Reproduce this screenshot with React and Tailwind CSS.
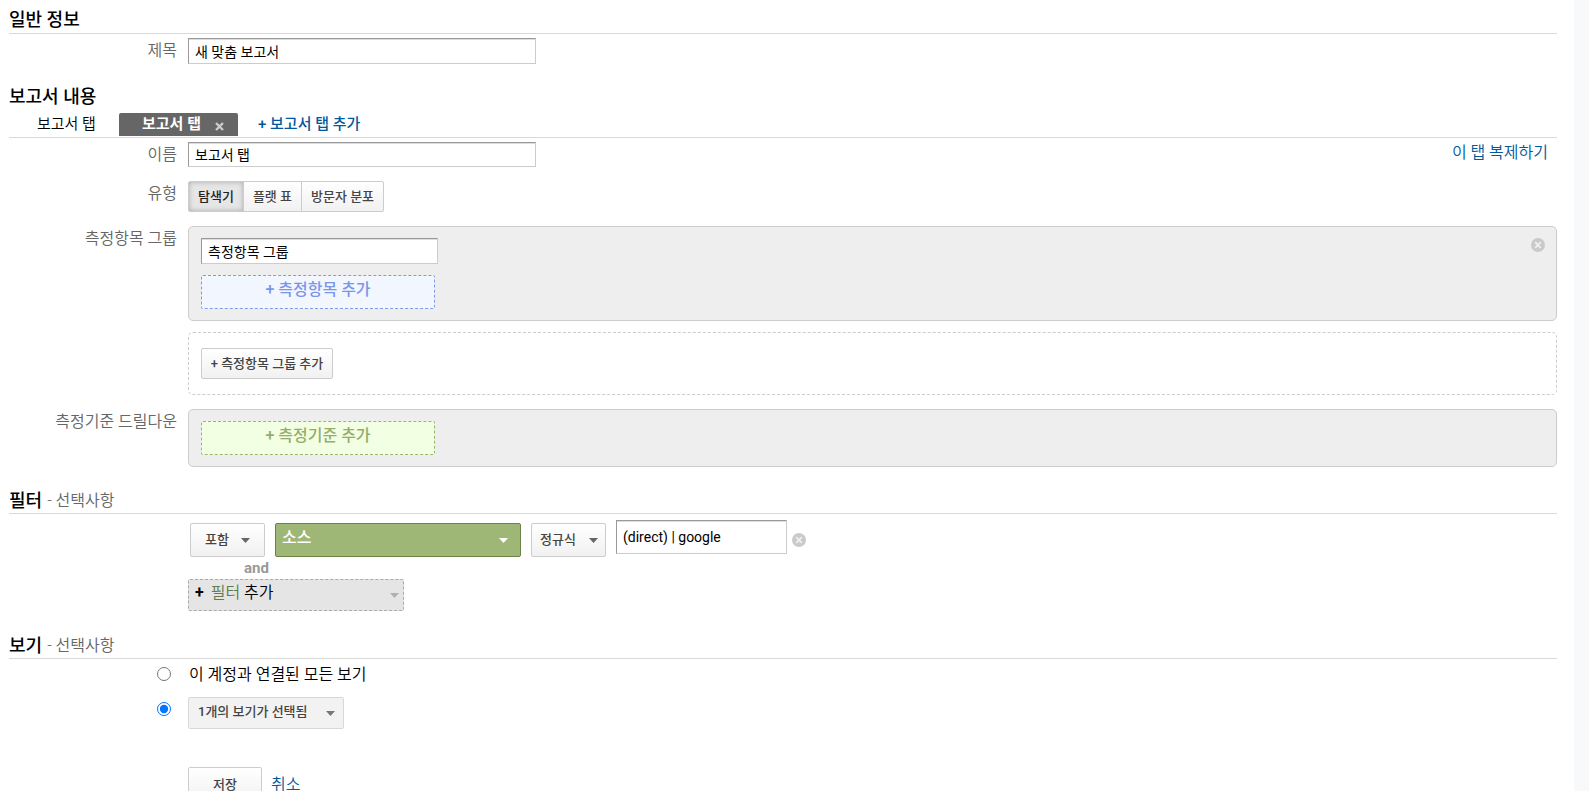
import React, { useState } from 'react';
import clsx from 'clsx';

const Caret = ({ className }) => (
    <svg className={className} width="9" height="5" viewBox="0 0 9 5" fill="currentColor" aria-hidden="true">
        <path d="M0 0h9L4.5 5z" />
    </svg>
);

const RemoveButton = ({ label, className }) => (
    <button type="button" aria-label={label} className={clsx('block h-[14px] w-[14px] shrink-0', className)}>
        <svg width="14" height="14" viewBox="0 0 14 14" aria-hidden="true">
            <circle cx="7" cy="7" r="7" fill="#cacaca" />
            <path d="M4.2 4.2l5.6 5.6M9.8 4.2L4.2 9.8" stroke="#f1f1f1" strokeWidth="1.7" />
        </svg>
    </button>
);

const SectionTitle = ({ title, note, className }) => (
    <div className={clsx('flex items-center border-b border-[#d9d9d9] leading-6', className)}>
        <h2 className="text-[18px] font-medium text-black">{title}</h2>
        {note && <span className="pl-[5px] text-base font-[350] text-[#666]">- {note}</span>}
    </div>
);

const Row = ({ label, htmlFor, className, children }) => (
    <div className={clsx('flex gap-[11px]', className)}>
        <label htmlFor={htmlFor} className="h-6 w-[168px] shrink-0 text-right text-base leading-[26px] font-[350] text-[#666]">
            {label}
        </label>
        {children}
    </div>
);

const inputStyle = 'border border-[#ccc] border-t-[#999] border-l-[#999] bg-white px-[6px] text-[14px] text-black shadow-[inset_0_1px_0_#ddd] outline-none';
const buttonStyle = 'border border-[#ccc] bg-linear-to-b from-white to-[#f1f1f1] text-[13px] font-medium text-[#444]';

const Select = ({ id, label, options, className, caret }) => (
    <div className="relative">
        <select id={id} aria-label={label} className={clsx('block appearance-none outline-none', className)}>
            {options.map((option) => (
                <option key={option}>{option}</option>
            ))}
        </select>
        <Caret className={clsx('pointer-events-none absolute', caret)} />
    </div>
);

const reportTypes = ['탐색기', '플랫 표', '방문자 분포'];

const App = () => {
    const [type, setType] = useState('탐색기');
    const [view, setView] = useState('selected');

    return (
        <div className="flex h-screen overflow-hidden bg-[#f8f9fb] font-['Roboto','Noto_Sans_CJK_KR',sans-serif]">
            <form className="min-w-0 flex-1 pr-[17px] pl-[9px] bg-white" onSubmit={(e) => e.preventDefault()}>
                <SectionTitle title="일반 정보" className="h-[34px] pt-[6px]" />
                <Row label="제목" htmlFor="title" className="pt-1">
                    <input id="title" defaultValue="새 맞춤 보고서" className={clsx(inputStyle, 'h-[26px] w-[348px] pb-px')} />
                </Row>

                <h2 className="h-11 pt-5 text-[18px] leading-[26px] font-medium text-black">보고서 내용</h2>
                <div className="flex h-[30px] items-end border-b border-[#d9d9d9] pb-px text-[15px]">
                    <button type="button" className="h-[23px] w-[110px] px-7 pb-[2px] text-left leading-5 font-[350] whitespace-nowrap text-black">
                        보고서 탭
                    </button>
                    <div className="flex h-[23px] w-[119px] rounded-t-xs bg-[#666] pl-[23px] text-white">
                        <button type="button" className="pb-[2px] leading-5 font-bold whitespace-nowrap">보고서 탭</button>
                        <button type="button" aria-label="탭 닫기" className="ml-[14px] pt-1 text-[#ccc]">
                            <svg width="9" height="9" viewBox="0 0 9 9" aria-hidden="true">
                                <path d="M1 1l7 7M8 1L1 8" stroke="currentColor" strokeWidth="2.4" />
                            </svg>
                        </button>
                    </div>
                    <button type="button" className="ml-5 h-[23px] pb-[2px] leading-5 font-medium text-[#00599c]">+ 보고서 탭 추가</button>
                </div>

                <div className="flex justify-between pt-1">
                    <Row label="이름" htmlFor="name">
                        <input id="name" defaultValue="보고서 탭" className={clsx(inputStyle, 'h-[25px] w-[348px] pb-px')} />
                    </Row>
                    <a href="#copy" className="pr-[9px] text-base leading-[22px] font-[350] text-[#00599c]">이 탭 복제하기</a>
                </div>

                <Row label="유형" className="pt-[14px]">
                    <div role="group" aria-label="유형" className="flex">
                        {reportTypes.map((name) => (
                            <button
                                key={name}
                                type="button"
                                aria-pressed={type === name}
                                onClick={() => setType(name)}
                                className={clsx(
                                    'h-[31px] border border-[#ccc] px-[9px] text-[13px] font-medium -ml-px first:ml-0 first:rounded-l-xs last:rounded-r-xs',
                                    type === name
                                        ? 'bg-[#e6e6e6] text-[#222] shadow-[inset_0_0_5px_#aaa]'
                                        : 'bg-linear-to-b from-white to-[#f1f1f1] text-[#444]'
                                )}
                            >
                                {name}
                            </button>
                        ))}
                    </div>
                </Row>

                <Row label="측정항목 그룹" htmlFor="group" className="pt-[14px]">
                    <div className="flex-1">
                        <div className="flex items-start justify-between rounded-[5px] border border-[#ccc] bg-[#eee] py-[11px] pr-[11px] pl-3">
                            <div>
                                <input id="group" defaultValue="측정항목 그룹" className={clsx(inputStyle, 'block h-[26px] w-[237px] pb-px')} />
                                <button type="button" className="mt-[11px] block h-[34px] w-[234px] rounded-xs border border-dashed border-[#7f9be8] bg-[#f2f7ff] pb-1 text-base font-medium text-[#7b96e8]">
                                    + 측정항목 추가
                                </button>
                            </div>
                            <RemoveButton label="그룹 삭제" />
                        </div>
                        <div className="mt-[11px] rounded-[5px] border border-dashed border-[#ccc] px-3 py-[15px]">
                            <button type="button" className={clsx(buttonStyle, 'block h-[31px] w-[132px] rounded-xs')}>
                                + 측정항목 그룹 추가
                            </button>
                        </div>
                    </div>
                </Row>

                <Row label="측정기준 드릴다운" className="pt-[14px]">
                    <div className="flex-1 rounded-[5px] border border-[#ccc] bg-[#eee] px-3 py-[11px]">
                        <button type="button" className="block h-[34px] w-[234px] rounded-xs border border-dashed border-[#9ab573] bg-[#f3ffe3] pb-1 text-base font-medium text-[#94ad6b]">
                            + 측정기준 추가
                        </button>
                    </div>
                </Row>

                <SectionTitle title="필터" note="선택사항" className="mt-5 h-[27px] pt-px" />
                <div className="flex items-start pt-[6px] pl-[181px]">
                    <div className="flex gap-[10px] pt-[3px]">
                        <Select label="조건" options={['포함', '제외']} className={clsx(buttonStyle, 'h-[34px] w-[75px] rounded-xs pl-[14px]')} caret="top-[15px] right-[15px] text-[#666]" />
                        <Select label="측정기준" options={['소스', '매체']} className="h-[34px] w-[246px] rounded-xs border border-[#6b8349] bg-[#9eb777] pb-1 pl-[6px] text-base font-medium text-white" caret="top-[15px] right-[13px] text-white" />
                        <Select label="일치 유형" options={['정규식', '일치']} className={clsx(buttonStyle, 'h-[34px] w-[75px] rounded-xs pl-2')} caret="top-[15px] right-2 text-[#666]" />
                    </div>
                    <input aria-label="값" defaultValue="(direct) | google" className={clsx(inputStyle, 'ml-[10px] h-[34px] w-[171px]')} />
                    <RemoveButton label="필터 삭제" className="mt-[13px] ml-[5px]" />
                </div>
                <div className="pl-[235px] text-[15px] leading-[22px] font-bold text-[#999]">and</div>
                <div className="pl-[179px]">
                    <button type="button" className="flex h-8 w-[216px] items-center rounded-xs border border-dashed border-[#aaa] bg-[#e5e5e5] pr-1 pl-[6px] text-base text-black">
                        <span className="pb-1 font-bold">+</span>
                        <span className="flex-1 pb-1 pl-[7px] text-left font-[350]"><span className="text-[#5e7e4e]">필터</span> 추가</span>
                        <Caret className="text-[#b0b0b0]" />
                    </button>
                </div>

                <SectionTitle title="보기" note="선택사항" className="mt-5 h-7 pt-[2px]" />
                <div className="flex items-center gap-[18px] pt-[3px] pl-[148px]">
                    <input id="all-views" type="radio" name="view" checked={view === 'all'} onChange={() => setView('all')} className="m-0 h-[14px] w-[14px]" />
                    <label htmlFor="all-views" className="h-6 text-base leading-[26px] font-[350] text-black">이 계정과 연결된 모든 보기</label>
                </div>
                <div className="flex items-start gap-[17px] pt-[11px] pl-[148px]">
                    <input type="radio" name="view" aria-label="선택한 보기" checked={view === 'selected'} onChange={() => setView('selected')} className="mt-[5px] h-[14px] w-[14px]" />
                    <Select label="보기 선택" options={['1개의 보기가 선택됨']} className="h-8 w-[156px] rounded-xs border border-[#d8d8d8] bg-[#f2f2f2] pb-[2px] pl-[9px] text-[13px] font-medium text-[#444]" caret="top-[14px] right-[9px] text-[#777]" />
                </div>

                <div className="flex items-center gap-[9px] pt-[38px] pl-[179px]">
                    <button type="submit" className={clsx(buttonStyle, 'h-[36px] w-[74px] rounded-xs')}>저장</button>
                    <a href="#cancel" className="pb-px text-base font-[350] text-[#00599c]">취소</a>
                </div>
            </form>
            <div className="w-[15px] shrink-0" />
        </div>
    );
};

export default App;
